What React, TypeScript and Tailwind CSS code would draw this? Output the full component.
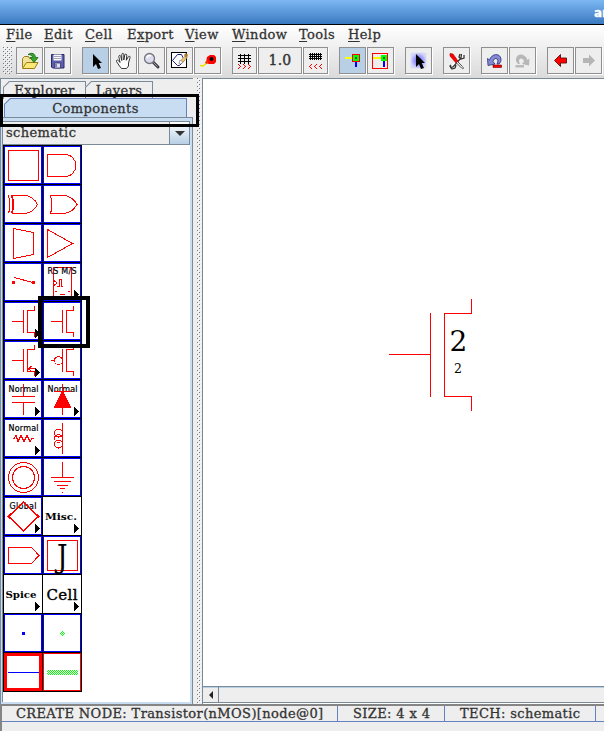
import React from "react";

const SERIF = "font-['DejaVu_Serif','Liberation_Serif',serif]";

function Dots({ className }: { className: string }) {
  return (
    <div className={className}>
      <svg className="block h-full w-full" shapeRendering="crispEdges">
        <defs>
          <pattern id="grip" width="4" height="4" patternUnits="userSpaceOnUse">
            <rect x="0" y="0" width="1" height="1" fill="#6f7a86" />
            <rect x="2" y="2" width="1" height="1" fill="#6f7a86" />
            <rect x="1" y="1" width="1" height="1" fill="#ffffff" />
            <rect x="3" y="3" width="1" height="1" fill="#ffffff" />
          </pattern>
        </defs>
        <rect width="100%" height="100%" fill="url(#grip)" />
      </svg>
    </div>
  );
}

/* ---------- Menu ---------- */

const menus = [
  { pre: "", key: "F", post: "ile", w: "w-[38px]" },
  { pre: "", key: "E", post: "dit", w: "w-[41px]" },
  { pre: "", key: "C", post: "ell", w: "w-[42px]" },
  { pre: "E", key: "x", post: "port", w: "w-[58px]" },
  { pre: "", key: "V", post: "iew", w: "w-[47px]" },
  { pre: "", key: "W", post: "indow", w: "w-[67px]" },
  { pre: "", key: "T", post: "ools", w: "w-[49px]" },
  { pre: "", key: "H", post: "elp", w: "w-[50px]" },
];

function MenuBar() {
  return (
    <div className="flex h-5 shrink-0 items-center pl-[6px] text-[13px] leading-5 tracking-[0.4px]">
      {menus.map((m) => (
        <div key={m.key + m.post} className={`shrink-0 whitespace-nowrap ${m.w}`}>
          {m.pre}
          <span className="underline underline-offset-2">{m.key}</span>
          {m.post}
        </div>
      ))}
    </div>
  );
}

/* ---------- Toolbar ---------- */

function Tool({ on, gap = "ml-px", w = "w-[27px]", children }: { on?: boolean; gap?: string; w?: string; children: React.ReactNode }) {
  return (
    <div
      className={`flex h-[27px] shrink-0 items-center justify-center border border-[#8f8f8f] shadow-[1px_1px_0_#fff] ${w} ${gap} ${on ? "bg-[#b8cfe5]" : "bg-[#eeeeee]"}`}
    >
      {children}
    </div>
  );
}

function Icon({ children, crisp }: { children: React.ReactNode; crisp?: boolean }) {
  return (
    <svg width="27" height="27" viewBox="0 0 27 27" className="shrink-0" fill="none" shapeRendering={crisp ? "crispEdges" : "auto"}>
      {children}
    </svg>
  );
}

const pointer = "M11 7v13l3-3 2 5 3-1-2.3-5H20z";

function Toolbar() {
  return (
    <div className="flex h-[32px] shrink-0 items-start pt-[2px] pl-[3px]">
      <Dots className="h-[27px] w-[9px]" />
      <Tool gap="ml-1">
        <Icon>
          <path d="M6.5 20.5v-9l2-2h4l1 2h4v3" fill="#efe39a" stroke="#9b7a18" />
          <path d="M6.5 21.5l4-6h11.5l-3.5 6z" fill="#fae878" stroke="#a07c10" />
          <path d="M12 7.500c4-2.500 7-1 7.500 3H22l-4 5-4-5h2.500c0-2-2-3-4.500-3z" fill="#36a72e" stroke="#14640f" strokeWidth=".8" />
        </Icon>
      </Tool>
      <Tool>
        <Icon>
          <path d="M7.500 7.500h12.500v13.500h-11.500l-1-1z" fill="#5f60ad" stroke="#27276b" />
          <path d="M9.500 7.500h8v6h-8z" fill="#fafafa" />
          <path d="M10 9.500h7M10 11.500h7" stroke="#a5a5bd" />
          <path d="M10.500 16h6v5h-6z" fill="#dedeec" stroke="#27276b" strokeWidth=".7" />
          <path d="M12 17v3" stroke="#27276b" />
        </Icon>
      </Tool>
      <Tool on gap="ml-[11px]">
        <Icon><path d={pointer} fill="#000" /></Icon>
      </Tool>
      <Tool>
        <Icon>
          <path d="M9.500 19L6.500 14.500c-.5-1.500 1.200-2 2-.8L10 15.500 8.800 9.500c0-1.500 1.700-1.500 2 0l1 4V7.500c0-1.500 2-1.500 2 0V13l1-5c.3-1.500 2-1 2 .3l-.5 5 2-3.500c.8-1.200 2.200-.5 1.700.8L18.500 16v3l-2 2.500h-5z" fill="#fff" stroke="#222" strokeWidth=".9" />
        </Icon>
      </Tool>
      <Tool>
        <Icon>
          <path d="M15 15l5 5" stroke="#3f3f46" strokeWidth="3" strokeLinecap="round" />
          <path d="M15.500 15.500l4 4" stroke="#a0a0aa" strokeWidth="1" />
          <circle cx="11.500" cy="11.500" r="5" fill="#dcdcef" stroke="#76767e" strokeWidth="1.300" />
          <path d="M9 11c0-2 2-3 4-2" stroke="#fff" strokeWidth="1.500" />
        </Icon>
      </Tool>
      <Tool>
        <Icon>
          <path d="M5.500 5.500h15v15h-15z" fill="#fff" stroke="#000" shapeRendering="crispEdges" />
          <path d="M11.500 7.500h4l3 6-5 5h-2l-5-5z" stroke="#202080" />
          <path d="M14 14l6-6 1.500 2-5 6z" fill="#e8c47a" stroke="#a9874d" strokeWidth=".5" />
          <path d="M14 13l3 2-2 2h-2z" fill="#fff" stroke="#555" strokeWidth=".5" />
          <path d="M18 8l2-2 2 2-2 3z" fill="#a37532" />
        </Icon>
      </Tool>
      <Tool>
        <Icon>
          <path d="M6 18.500l3 .5 5-4" stroke="#eee000" strokeWidth="1.600" />
          <path d="M13 10l3-2h4l2 2v5l-2 2h-5l-3-1z" fill="#f00" />
          <circle cx="17.500" cy="12" r="2" fill="#000" />
          <path d="M11 15l3-2 1 2-3 2z" fill="#e30" />
        </Icon>
      </Tool>
      <Tool gap="ml-[11px]" w="w-[25px]">
        <Icon crisp>
          <path d="M7 8.500h13M7 11.500h13M7 14.500h13M9.500 7v10M13.500 7v10M17.500 7v10" stroke="#000" />
          <path d="M7 17h1v1h1v1h1v1h-1v1h-1v1h-1v-1h1v-1h1v-1h-1v-1h-1zM12 17h1v1h1v1h1v1h-1v1h-1v1h-1v-1h1v-1h1v-1h-1v-1h-1zM17 17h1v1h1v1h1v1h-1v1h-1v1h-1v-1h1v-1h1v-1h-1v-1h-1z" fill="#f00" />
        </Icon>
      </Tool>
      <Tool w="w-[44px]">
        <span className="text-[14px] tracking-[0.2px] [-webkit-text-stroke:0.4px]">1.0</span>
      </Tool>
      <Tool w="w-[25px]">
        <Icon crisp>
          <path d="M7 7.500h13M7 9.500h13M7 11.500h13M8.500 6v7M10.500 6v7M12.500 6v7M14.500 6v7M16.500 6v7M18.500 6v7" stroke="#000" />
          <path d="M9 17h1v1h-1v1h-1v1h1v1h1v1h-1v-1h-1v-1h-1v-1h1v-1h1zM14 17h1v1h-1v1h-1v1h1v1h1v1h-1v-1h-1v-1h-1v-1h1v-1h1zM19 17h1v1h-1v1h-1v1h1v1h1v1h-1v-1h-1v-1h-1v-1h1v-1h1z" fill="#f00" />
        </Icon>
      </Tool>
      <Tool on gap="ml-[11px]">
        <Icon crisp>
          <path d="M6 11h8" stroke="#ff0" strokeWidth="2" />
          <path d="M17 14v6" stroke="#00f" strokeWidth="2" />
          <path d="M13.500 7.500h7v7h-7z" fill="#0f0" stroke="#f00" />
          <path d="M16 10h2v2h-2z" fill="#064" />
        </Icon>
      </Tool>
      <Tool>
        <Icon crisp>
          <path d="M5.500 6.500h15v15h-15z" fill="#eee" stroke="#f00" />
          <path d="M6 11h8" stroke="#ff0" strokeWidth="2" />
          <path d="M17 14v6" stroke="#00f" strokeWidth="2" />
          <path d="M14 8h6v6h-6z" fill="#0f0" />
          <path d="M16 10h2v2h-2z" fill="#064" />
        </Icon>
      </Tool>
      <Tool gap="ml-[11px]">
        <Icon>
          <defs><radialGradient id="halo"><stop offset=".35" stopColor="#8585ff" /><stop offset="1" stopColor="#d9d9f5" /></radialGradient></defs>
          <rect x="5.500" y="5.500" width="16" height="16" rx="2" fill="url(#halo)" />
          <path d={pointer} fill="#000" />
        </Icon>
      </Tool>
      <Tool gap="ml-[11px]">
        <Icon>
          <path d="M7 20.500l3-.5 8-9 .5-4M8 18l-1 1 2 3 3-1 1-3M17 7l-1 3 2 2 3-1v-3" stroke="#333" strokeWidth="1.300" fill="#fff" />
          <path d="M14.500 14.500l5 5c2 2 .5 3-1 1.500l-5-5" stroke="#555" fill="#eee" />
          <path d="M7 6.500l3 .5 5 7-2 2-6-7z" fill="#f00" stroke="#900" strokeWidth=".6" />
        </Icon>
      </Tool>
      <Tool gap="ml-[11px]">
        <Icon>
          <path d="M6.500 11.500l2 1.500C10.500 6.500 19 5.500 20 12c.2 2-.5 3.500-2 5h-2c1.500-2.500 1-5.500-1-5.500-1.500 0-2.500 1-3 3l2 2.500-7 1.500z" fill="#8389d2" stroke="#282c78" strokeWidth=".8" />
          <path d="M12 18h8.500v2.500h-8.500z" fill="#f00" stroke="#700" strokeWidth=".6" />
        </Icon>
      </Tool>
      <Tool>
        <Icon>
          <path d="M20.500 11.500l-2 1.500C16.500 6.500 8 5.500 7 12c-.2 2 .5 3.500 2 5h2c-1.500-2.500-1-5.500 1-5.500 1.500 0 2.500 1 3 3l-2 2.500 7 1.500z" fill="#b7b7b7" />
          <path d="M6.500 18h8.500v2.500h-8.500z" fill="#bababa" />
        </Icon>
      </Tool>
      <Tool gap="ml-[11px]">
        <Icon><path d="M7.500 13.500l6-6v3.500h6v5h-6v3.500z" fill="#f00" stroke="#511" strokeWidth=".9" /></Icon>
      </Tool>
      <Tool>
        <Icon><path d="M20 13.500l-6-6v3.500h-6v5h6v3.500z" fill="#b5b5b5" /></Icon>
      </Tool>
    </div>
  );
}

/* ---------- Component palette ---------- */

const more = <path d="M31 27l5.500 4.500L31 36z" fill="#000" stroke="none" />;
const fet = <path d="M23.500 30.500h7v4M30.500 4v4.500h-7v22M19.500 8v23" />;

function Tiny({ children, x, w, size = 8, y = 11.500 }: { children: string; x: number; w: number; size?: number; y?: number }) {
  return (
    <text x={x} y={y} fontSize={size} textLength={w} fill="#000" stroke="#000" strokeWidth=".2" fontFamily="'DejaVu Sans',sans-serif">
      {children}
    </text>
  );
}

function Serif({ children, x, w, y, size, bold }: { children: string; x: number; w: number; y: number; size: number; bold?: boolean }) {
  return (
    <text x={x} y={y} fontSize={size} textLength={w} lengthAdjust="spacingAndGlyphs" fill="#000" stroke="none" fontWeight={bold ? 700 : 400} fontFamily="'DejaVu Serif',serif">
      {children}
    </text>
  );
}

const BLUE = "ring-1 ring-inset ring-[#0000ff]";

const cells: { ring: string; art: React.ReactNode }[] = [
  { ring: BLUE, art: <path d="M4.500 4.500h30v30h-30z" /> },
  { ring: BLUE, art: <path d="M21.500 8.500h-17v22h17c15 0 15-22 0-22z" /> },
  { ring: BLUE, art: <path d="M4.500 10.500q3 9 0 18M7.500 10.500q3 9 0 18M8.500 10.500h13q8 1 12 9-4 8-12 9h-13q2-9 0-18" /> },
  { ring: BLUE, art: <path d="M7.500 10.500h14q8 1 12.500 9-4.500 8-12.500 9h-14q3-9 0-18" /> },
  { ring: BLUE, art: <path d="M9.500 4.500l20 4v22l-20 4z" /> },
  { ring: BLUE, art: <path d="M4.500 5.500v28l25-14z" /> },
  { ring: BLUE, art: <><path d="M8 18h3v3H8zM28 18h3v3h-3z" fill="#f00" stroke="none" /><path d="M10.500 14.500l18 5" /></> },
  { ring: BLUE, art: <><path d="M10.500 4.500h18v28.500h-18zM11 17.500l3 2.500-3 2.500M14 23.500h2v-7h2v7h2M12 28.500h2M25 28.500h2M17 31.500h5" /><Tiny x={4.500} w={29} y={11}>RS M/S</Tiny>{more}</> },
  { ring: BLUE, art: <>{fet}<path d="M8 19.500h11" />{more}</> },
  { ring: BLUE, art: <>{fet}<path d="M8 19.500h11" /></> },
  { ring: BLUE, art: <>{fet}<path d="M8 19.500h11M28 25l-4 2.500 4 3M24 27.500h7" />{more}</> },
  { ring: BLUE, art: <>{fet}<path d="M8 19.500h3" /><circle cx="15.500" cy="19.500" r="4" /></> },
  { ring: BLUE, art: <><Tiny x={4.500} w={30}>Normal</Tiny><path d="M19.500 4v12.500M8 16.500h23M8 22.500h23M19.500 22.500v12.500" />{more}</> },
  { ring: BLUE, art: <><Tiny x={4.500} w={30}>Normal</Tiny><path d="M19.500 4v31M11 11.500h17" /><path d="M19.500 11l8 16h-16z" fill="#f00" />{more}</> },
  { ring: BLUE, art: <><Tiny x={4.500} w={30}>Normal</Tiny><path d="M9 19.500h1l2-3 2 6 3-6 3 6 3-6 3 6 2-3h2" />{more}</> },
  { ring: BLUE, art: <><path d="M19.500 4v31" /><circle cx="15.500" cy="14" r="4" /><circle cx="15.500" cy="19.500" r="4" /><circle cx="15.500" cy="25" r="4" /></> },
  { ring: BLUE, art: <><circle cx="19.500" cy="19.500" r="15" /><circle cx="19.500" cy="19.500" r="11" /></> },
  { ring: BLUE, art: <path d="M19.500 4v15M8 19.500h23M11 23.500h17M14 27.500h11M17 30.500h5M19 34.500h1" /> },
  { ring: BLUE, art: <><Tiny x={5.500} w={27}>Global</Tiny><path d="M19.500 5l15 14.500-15 14.500-15-14.500z" strokeWidth="1.500" />{more}</> },
  { ring: "", art: <><Serif x={2} w={32} y={22.500} size={10} bold>Misc.</Serif>{more}</> },
  { ring: BLUE, art: <path d="M4.500 11.500h23l7.500 8-7.500 8h-23z" /> },
  { ring: BLUE, art: <><path d="M4.500 4.500h30v30h-30z" /><g stroke="#000" strokeWidth=".5"><Serif x={14} w={10.500} y={30.500} size={31}>J</Serif></g></> },
  { ring: "", art: <><Serif x={1.500} w={31} y={23} size={10} bold>Spice</Serif>{more}</> },
  { ring: "", art: <><text x="3.500" y="24.500" fontSize="15" textLength="31" fill="#000" stroke="#000" strokeWidth=".4" fontFamily="'DejaVu Serif',serif">Cell</text>{more}</> },
  { ring: BLUE, art: <path d="M18 18h3v3h-3z" fill="#00f" stroke="none" /> },
  { ring: BLUE, art: <path d="M19 17h1v1h-1zM18 18h1v1h-1zM20 18h1v1h-1zM17 19h1v1h-1zM19 19h1v1h-1zM21 19h1v1h-1zM18 20h1v1h-1zM20 20h1v1h-1zM19 21h1v1h-1z" fill="#0f0" stroke="none" /> },
  { ring: "ring-3 ring-inset ring-[#ff0000]", art: <path d="M4 19.500h31" stroke="#00f" /> },
  {
    ring: "ring-1 ring-inset ring-[#ff0000]",
    art: (
      <>
        <defs>
          <pattern id="poly" width="2" height="2" patternUnits="userSpaceOnUse">
            <path d="M0 0h1v1H0zM1 1h1v1H1z" fill="#0f0" stroke="none" />
          </pattern>
        </defs>
        <rect x="4" y="17" width="31" height="5" fill="url(#poly)" stroke="none" />
      </>
    ),
  },
];

function Palette() {
  return (
    <div className="grid w-[79px] grid-cols-[39px_39px] border-r border-b border-black">
      {cells.map((c, i) => (
        <div key={i} className="h-[39px] border-t border-l border-black bg-white">
          <div className={`h-[38px] w-[38px] ${c.ring}`}>
            <svg width="38" height="38" viewBox="0 0 38 38" fill="none" stroke="#f00" className="block [-webkit-text-stroke:0]" shapeRendering="crispEdges">
              {c.art}
            </svg>
          </div>
        </div>
      ))}
    </div>
  );
}

function Tab({ label, className, on }: { label: string; className: string; on?: boolean }) {
  return (
    <div
      className={`relative overflow-hidden border border-b-0 text-center text-[13px] tracking-[0.4px] [clip-path:polygon(6px_0,100%_0,100%_100%,0_100%,0_6px)] ${on ? "border-[#6382bf] bg-[#c8ddf2]" : "border-[#7a8a99] bg-[#eeeeee]"} ${className}`}
    >
      <svg width="7" height="7" className="absolute -top-px -left-px" stroke={on ? "#6382bf" : "#7a8a99"}>
        <path d="M0 6.500L6.500 0" strokeWidth="1.500" />
      </svg>
      {label}
    </div>
  );
}

function SidePanel() {
  return (
    <div className="relative flex w-[193px] shrink-0 flex-col border-t border-l border-[#7a8a99] bg-[#eeeeee]">
      <div className="flex pt-[2px] pl-[2px]">
        <Tab label="Explorer" className="h-[18px] w-[83px] leading-[17px]" />
        <Tab label="Layers" className="-ml-px h-[18px] w-[68px] leading-[17px]" />
      </div>
      <Tab label="Components" on className="-mt-px ml-[3px] h-[19px] w-[183px] leading-[19px]" />
      <div className="flex grow flex-col border-t border-r border-[#7a8a99] bg-[#c8ddf2] pt-[3px] pr-[2px] pb-[2px] pl-px">
        <div className="flex h-[24px] shrink-0 border border-[#7a8a99] bg-[#eeeeee]">
          <div className="grow pl-[3px] text-[13px] leading-[21px] tracking-[0.4px]">schematic</div>
          <div className="flex w-[20px] items-center justify-center border-l border-[#7a8a99] bg-linear-to-b from-white to-[#b8cfe5]">
            <div className="border-x-[5px] border-t-[5px] border-x-transparent border-t-[#333]" />
          </div>
        </div>
        <div className="grow border-l border-[#7a8a99] bg-white">
          <Palette />
        </div>
      </div>
      <div className="absolute top-[15px] -left-px h-[33px] w-[199px] border-[3px] border-black" />
      <div className="absolute top-[217px] left-[37px] h-[52px] w-[52px] border-[4px] border-black" />
    </div>
  );
}

function Canvas() {
  return (
    <div className="flex min-w-0 grow flex-col border-t border-l border-[#7a8a99] bg-white">
      <svg width="401" height="607" viewBox="203 79 401 607" className="block shrink-0" fill="none" stroke="#f00" shapeRendering="crispEdges">
        <path d="M389 354.500h41M430.500 313v84M471.500 299v14.500h-27v83h27v14.500" />
        <g fill="#000" stroke="none" fontFamily="'DejaVu Serif',serif">
          <text x="449.500" y="351" fontSize="28">2</text>
          <text x="454" y="373" fontSize="12.500">2</text>
        </g>
      </svg>
      <div className="flex h-[17px] shrink-0 border-y border-[#7a8a99] bg-[#eeeeee] shadow-[inset_0_1px_0_#b8cfe5]">
        <div className="flex w-[16px] items-center justify-center border-r border-[#7a8a99]">
          <div className="border-y-[4px] border-r-[4px] border-y-transparent border-r-[#222]" />
        </div>
      </div>
    </div>
  );
}

function StatusBar() {
  return (
    <div className="h-[27px] shrink-0 border-t-2 border-l-2 border-[#858585] bg-[#eeeeee]">
      <div className="flex h-[16px] border-b border-[#6382bf] text-[13px] leading-[15px] tracking-[0.38px] whitespace-nowrap">
        <div className="w-[336px] shrink-0 border-r border-[#6382bf] pl-[14px]">CREATE NODE: Transistor(nMOS)[node@0]</div>
        <div className="w-[107px] shrink-0 border-r border-[#6382bf] pl-[15px]">SIZE: 4 x 4</div>
        <div className="w-[151px] shrink-0 border-r border-[#6382bf] pl-[15px]">TECH: schematic</div>
      </div>
    </div>
  );
}

export default function App() {
  return (
    <div className={`flex h-[731px] w-[604px] flex-col overflow-hidden bg-[#eeeeee] text-[#333] [-webkit-text-stroke:0.3px] ${SERIF}`}>
      <div className="flex h-[25px] shrink-0 justify-end border-b border-black bg-linear-to-b from-[#7db7f3] to-[#3b7ac1]">
        <div className="w-[10px] overflow-hidden font-['DejaVu_Sans',sans-serif] text-[12px] leading-[26px] font-bold whitespace-nowrap text-white">ar</div>
      </div>
      <div className="flex h-[53px] shrink-0 flex-col bg-linear-to-b from-white to-[#dadada]">
        <MenuBar />
        <Toolbar />
      </div>
      <div className="flex h-[626px] shrink-0">
        <SidePanel />
        <Dots className="w-[9px] shrink-0 border-r border-l-4 border-[#eeeeee]" />
        <Canvas />
      </div>
      <StatusBar />
    </div>
  );
}
